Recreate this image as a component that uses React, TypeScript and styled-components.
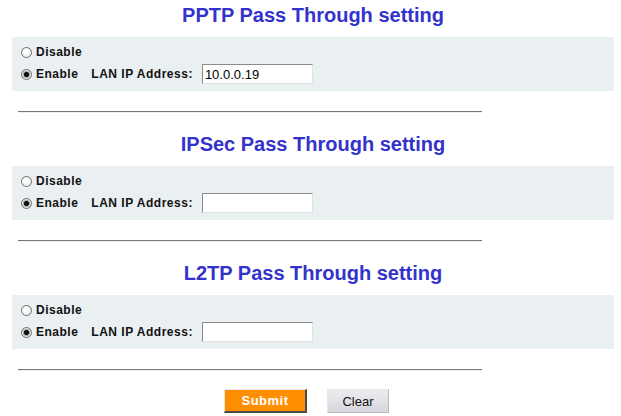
import React from "react";
import styled, { createGlobalStyle } from "styled-components";

const GlobalStyle = createGlobalStyle`
  html, body {
    margin: 0;
    padding: 0;
    background: #fff;
  }
  body {
    font-family: "Liberation Sans", Arial, sans-serif;
  }
`;

const sections = [
  { name: "PPTP", ip: "10.0.0.19" },
  { name: "IPSec", ip: "" },
  { name: "L2TP", ip: "" },
];

const Page = styled.div`
  width: 621px;
  padding: 0 7px 0 12px;
  box-sizing: border-box;
`;

const Section = styled.section`
  display: flex;
  flex-direction: column;
`;

const Title = styled.h2`
  margin: 0;
  height: 30px;
  line-height: 30px;
  text-align: center;
  font-size: 20px;
  font-weight: bold;
  color: #3333cc;
`;

const Panel = styled.div`
  margin-top: 7px;
  height: 54px;
  box-sizing: border-box;
  padding: 4px 0 6px 9px;
  background: #eaeff2;
  display: flex;
  flex-direction: column;
`;

const Row = styled.div`
  height: 22px;
  display: flex;
  align-items: center;
`;

const Radio = styled.span<{ $checked?: boolean }>`
  width: 11px;
  height: 11px;
  box-sizing: border-box;
  border-radius: 50%;
  border: 1px solid #6e6e6e;
  background: ${(p) =>
    p.$checked
      ? "radial-gradient(circle at 50% 50%, #111 0 2.2px, #9a9a9a 2.8px, #e4e4e4 4px)"
      : "radial-gradient(circle at 40% 40%, #fff 0 2px, #f1f1f1 4px)"};
  margin-right: 4px;
  flex-shrink: 0;
`;

const Label = styled.span<{ $gap?: number }>`
  font-size: 12px;
  font-weight: bold;
  letter-spacing: 0.5px;
  color: #111;
  margin-right: ${(p) => p.$gap ?? 0}px;
`;

const IpInput = styled.input`
  width: 111px;
  height: 20px;
  box-sizing: border-box;
  margin: 0;
  padding: 1px 2px 0;
  border-style: solid;
  border-width: 1px;
  border-color: #8a8a8a #e2e2e2 #e2e2e2 #8a8a8a;
  background: #fff;
  font-family: "Liberation Sans", Arial, sans-serif;
  font-size: 13px;
  color: #000;
  outline: none;
`;

const Divider = styled.hr`
  margin: 20px 0 16px 6px;
  width: 464px;
  height: 0;
  border: 0;
  border-top: 1px solid #777;
  border-bottom: 1px solid #eee;
`;

const Buttons = styled.div`
  margin-top: 2px;
  display: flex;
  justify-content: center;
  gap: 20px;
  padding-right: 13px;
`;

const Button = styled.button<{ $primary?: boolean }>`
  height: 24px;
  width: ${(p) => (p.$primary ? 83 : 62)}px;
  box-sizing: border-box;
  margin: 0;
  padding: 0;
  font-family: "Liberation Sans", Arial, sans-serif;
  font-size: 13px;
  font-weight: ${(p) => (p.$primary ? "bold" : "normal")};
  letter-spacing: ${(p) => (p.$primary ? "0.5px" : "0")};
  color: ${(p) => (p.$primary ? "#fff" : "#111")};
  background: ${(p) =>
    p.$primary ? "#ff8f00" : "linear-gradient(#ececf0, #d6d6dc)"};
  border-style: solid;
  border-width: ${(p) => (p.$primary ? "1px 2px 2px 1px" : "1px")};
  border-color: ${(p) =>
    p.$primary ? "#e8e8e8 #4a4a4a #4a4a4a #e8e8e8" : "#e6e6e6 #b8b8bc #b8b8bc #e6e6e6"};
`;

export default function App() {
  return (
    <Page>
      <GlobalStyle />
      {sections.map((s) => (
        <Section key={s.name}>
          <Title>{s.name} Pass Through setting</Title>
          <Panel>
            <Row>
              <Radio />
              <Label>Disable</Label>
            </Row>
            <Row>
              <Radio $checked />
              <Label $gap={13}>Enable</Label>
              <Label $gap={9}>LAN IP Address:</Label>
              <IpInput defaultValue={s.ip} />
            </Row>
          </Panel>
          <Divider />
        </Section>
      ))}
      <Buttons>
        <Button $primary>Submit</Button>
        <Button>Clear</Button>
      </Buttons>
    </Page>
  );
}
